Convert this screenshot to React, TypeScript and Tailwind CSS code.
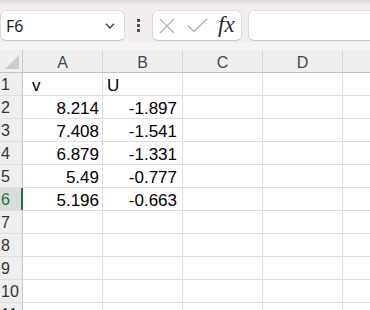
import React from "react";

const rows: { a: string; b: string; aLeft?: boolean }[] = [
  { a: "v", b: "U", aLeft: true },
  { a: "8.214", b: "-1.897" },
  { a: "7.408", b: "-1.541" },
  { a: "6.879", b: "-1.331" },
  { a: "5.49", b: "-0.777" },
  { a: "5.196", b: "-0.663" },
  { a: "", b: "" },
  { a: "", b: "" },
  { a: "", b: "" },
  { a: "", b: "" },
  { a: "", b: "" },
];

const cellFont = { fontFamily: '"Liberation Sans", Arial, sans-serif' };

export default function App() {
  return (
    <div className="w-[370px] h-[310px] overflow-hidden bg-white" style={cellFont}>
      {/* toolbar */}
      <div className="h-[42px] flex items-start pt-[10px] bg-[linear-gradient(to_bottom,#dfdadd_0px,#f1edf0_5px,#f1edf0_100%)]">
        <div className="w-[125px] h-[31px] bg-white border border-[#dcd8db] border-b-[#cbc7ca] rounded-[6px] flex items-center justify-between pl-[5px] pr-[9px]">
          <span className="text-[16px] text-[#1f1f1f] leading-none" style={{ fontFamily: '"Noto Sans", sans-serif' }}>F6</span>
          <svg width="10" height="6" viewBox="0 0 10 6" fill="none">
            <path d="M1 0.8 L5 5 L9 0.8" stroke="#404040" strokeWidth="1.3" />
          </svg>
        </div>
        <div className="w-[27px] h-[31px] flex flex-col items-center justify-center gap-[2px]">
          <div className="w-[3px] h-[3px] bg-[#505050]" />
          <div className="w-[3px] h-[3px] bg-[#505050]" />
          <div className="w-[3px] h-[3px] bg-[#505050]" />
        </div>
        <div className="w-[90px] h-[31px] bg-white border border-[#dcd8db] border-b-[#cbc7ca] rounded-[6px] flex items-center pl-[6px]">
          <svg width="16" height="16" viewBox="0 0 16 16" fill="none">
            <path d="M1 1 L15 15 M15 1 L1 15" stroke="#b3b3b3" strokeWidth="1.3" />
          </svg>
          <svg width="21" height="15" viewBox="0 0 21 15" fill="none" className="ml-[12px]">
            <path d="M0.8 7.5 L7 13.5 L20.2 0.8" stroke="#b3b3b3" strokeWidth="1.3" />
          </svg>
          <span
            className="ml-[10px] text-[23px] italic text-[#2a2a2a] leading-none -mt-[2px]"
            style={{ fontFamily: '"Liberation Serif", "Times New Roman", serif' }}
          >
            fx
          </span>
        </div>
        <div className="flex-1 h-[31px] ml-[6px] -mr-[12px] bg-white border border-[#dcd8db] border-b-[#cbc7ca] rounded-[6px]" />
      </div>
      {/* band */}
      <div className="h-[8px] bg-[#f4f4f4]" />
      {/* column header */}
      <div className="h-[23px] flex bg-[#efefef] border-b border-[#c4c4c4]">
        <div className="w-[23px] border-r border-[#c8c8c8] flex items-end justify-end pr-[3px] pb-[3px]">
          <svg width="14" height="14" viewBox="0 0 14 14">
            <path d="M14 0 L14 14 L0 14 Z" fill="#cdcdcd" />
          </svg>
        </div>
        {["A", "B", "C", "D"].map((c) => (
          <div
            key={c}
            className="w-[80px] border-r border-[#d6d6d6] flex items-center justify-center pt-[3px] text-[16px] text-[#3c4a60]"
          >
            {c}
          </div>
        ))}
        <div className="flex-1" />
      </div>
      {/* rows */}
      {rows.map((r, i) => {
        const sel = i === 5;
        return (
          <div key={i} className="h-[23px] flex border-b border-[#dedede]">
            <div
              className={
                sel
                  ? "w-[23px] bg-[#dcdcdc] border-r-2 border-[#217346] text-[#217346] text-[16px] leading-none flex items-center pl-[1px] pt-[2px]"
                  : "w-[23px] bg-[#efefef] border-r border-[#c8c8c8] text-[#333] text-[16px] leading-none flex items-center pl-[1px] pt-[2px]"
              }
            >
              {i + 1}
            </div>
            <div
              className={
                r.aLeft
                  ? "w-[80px] border-r border-[#dedede] flex items-center pl-[9px] pt-[2px] text-[17px] text-black leading-none"
                  : "w-[80px] border-r border-[#dedede] flex items-center justify-end pr-[3px] pt-[2px] text-[17px] text-black leading-none"
              }
            >
              {r.a}
            </div>
            <div
              className={
                r.aLeft
                  ? "w-[80px] border-r border-[#dedede] flex items-center pl-[4px] pt-[2px] text-[17px] text-black leading-none"
                  : "w-[80px] border-r border-[#dedede] flex items-center justify-end pr-[5px] pt-[2px] text-[17px] text-black leading-none"
              }
            >
              {r.b}
            </div>
            <div className="w-[80px] border-r border-[#dedede]" />
            <div className="w-[80px] border-r border-[#dedede]" />
            <div className="flex-1" />
          </div>
        );
      })}
    </div>
  );
}
